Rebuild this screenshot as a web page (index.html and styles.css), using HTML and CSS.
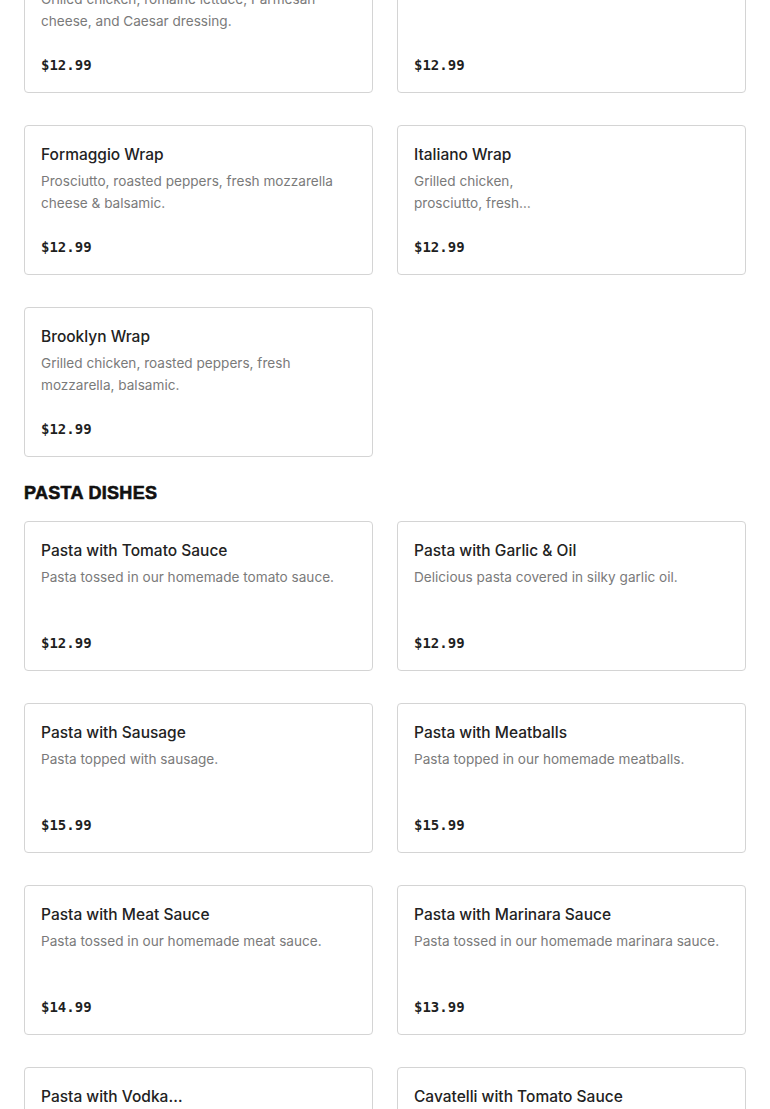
FILE: index.html
```html
<!DOCTYPE html>
<html lang="en">
<head>
<meta charset="utf-8">
<title>Menu</title>
<link rel="stylesheet" href="styles.css">
</head>
<body>
<main class="page">
  <section class="section">
    <div class="grid">
      <article class="card">
        <h3 class="card-title">Caesar Wrap</h3>
        <p class="card-desc">Grilled chicken, romaine lettuce, Parmesan cheese, and Caesar dressing.</p>
        <div class="card-price">$12.99</div>
      </article>
      <article class="card">
        <h3 class="card-title">Chicken Wrap</h3>
        <p class="card-desc"></p>
        <div class="card-price">$12.99</div>
      </article>
      <article class="card">
        <h3 class="card-title">Formaggio Wrap</h3>
        <p class="card-desc">Prosciutto, roasted peppers, fresh mozzarella cheese &amp; balsamic.</p>
        <div class="card-price">$12.99</div>
      </article>
      <article class="card">
        <h3 class="card-title">Italiano Wrap</h3>
        <p class="card-desc">Grilled chicken,<br>prosciutto, fresh…</p>
        <div class="card-price">$12.99</div>
      </article>
      <article class="card">
        <h3 class="card-title">Brooklyn Wrap</h3>
        <p class="card-desc">Grilled chicken, roasted peppers, fresh mozzarella, balsamic.</p>
        <div class="card-price">$12.99</div>
      </article>
    </div>
  </section>

  <section class="section">
    <h2 class="section-title">PASTA DISHES</h2>
    <div class="grid">
      <article class="card">
        <h3 class="card-title">Pasta with Tomato Sauce</h3>
        <p class="card-desc">Pasta tossed in our homemade tomato sauce.</p>
        <div class="card-price">$12.99</div>
      </article>
      <article class="card">
        <h3 class="card-title">Pasta with Garlic &amp; Oil</h3>
        <p class="card-desc">Delicious pasta covered in silky garlic oil.</p>
        <div class="card-price">$12.99</div>
      </article>
      <article class="card">
        <h3 class="card-title">Pasta with Sausage</h3>
        <p class="card-desc">Pasta topped with sausage.</p>
        <div class="card-price">$15.99</div>
      </article>
      <article class="card">
        <h3 class="card-title">Pasta with Meatballs</h3>
        <p class="card-desc">Pasta topped in our homemade meatballs.</p>
        <div class="card-price">$15.99</div>
      </article>
      <article class="card">
        <h3 class="card-title">Pasta with Meat Sauce</h3>
        <p class="card-desc">Pasta tossed in our homemade meat sauce.</p>
        <div class="card-price">$14.99</div>
      </article>
      <article class="card">
        <h3 class="card-title">Pasta with Marinara Sauce</h3>
        <p class="card-desc">Pasta tossed in our homemade marinara sauce.</p>
        <div class="card-price">$13.99</div>
      </article>
      <article class="card">
        <h3 class="card-title">Pasta with Vodka…</h3>
        <p class="card-desc">Pasta tossed in our homemade vodka sauce.</p>
        <div class="card-price">$14.99</div>
      </article>
      <article class="card">
        <h3 class="card-title">Cavatelli with Tomato Sauce</h3>
        <p class="card-desc">Cavatelli tossed in our homemade tomato sauce.</p>
        <div class="card-price">$13.99</div>
      </article>
    </div>
  </section>
</main>
</body>
</html>
```
FILE: styles.css
```css
* { box-sizing: border-box; }
html, body { margin: 0; padding: 0; background: #fff; }
body {
  font-family: Inter, "Noto Sans", Roboto, sans-serif;
  color: #1f1f1f;
  overflow: hidden;
}
.page {
  margin-top: -57px;
  padding: 0 24px;
}
.section-title {
  margin: 24px 0 16px;
  font-family: "Liberation Sans", Arial, sans-serif;
  font-weight: 900;
  font-size: 18px;
  line-height: 24px;
  letter-spacing: 0.3px;
  color: #111;
  -webkit-text-stroke: 0.6px #111;
}
.grid {
  display: grid;
  grid-template-columns: 1fr 1fr;
  column-gap: 24px;
  row-gap: 32px;
}
.card {
  height: 150px;
  border: 1px solid #d4d4d4;
  border-radius: 4px;
  padding: 17px 16px 15px;
  display: flex;
  flex-direction: column;
  background: #fff;
}
.card-title {
  margin: 0;
  font-size: 15.5px;
  font-weight: 500;
  line-height: 24px;
  color: #222;
  white-space: nowrap;
}
.card-desc {
  margin: 3px 0 0;
  font-size: 13.6px;
  line-height: 22px;
  color: #7a7a7a;
}
.card-price {
  margin-top: auto;
  font-family: "DejaVu Sans Mono", "Liberation Mono", monospace;
  font-weight: 700;
  font-size: 14px;
  line-height: 24px;
  color: #1f1f1f;
}
```
